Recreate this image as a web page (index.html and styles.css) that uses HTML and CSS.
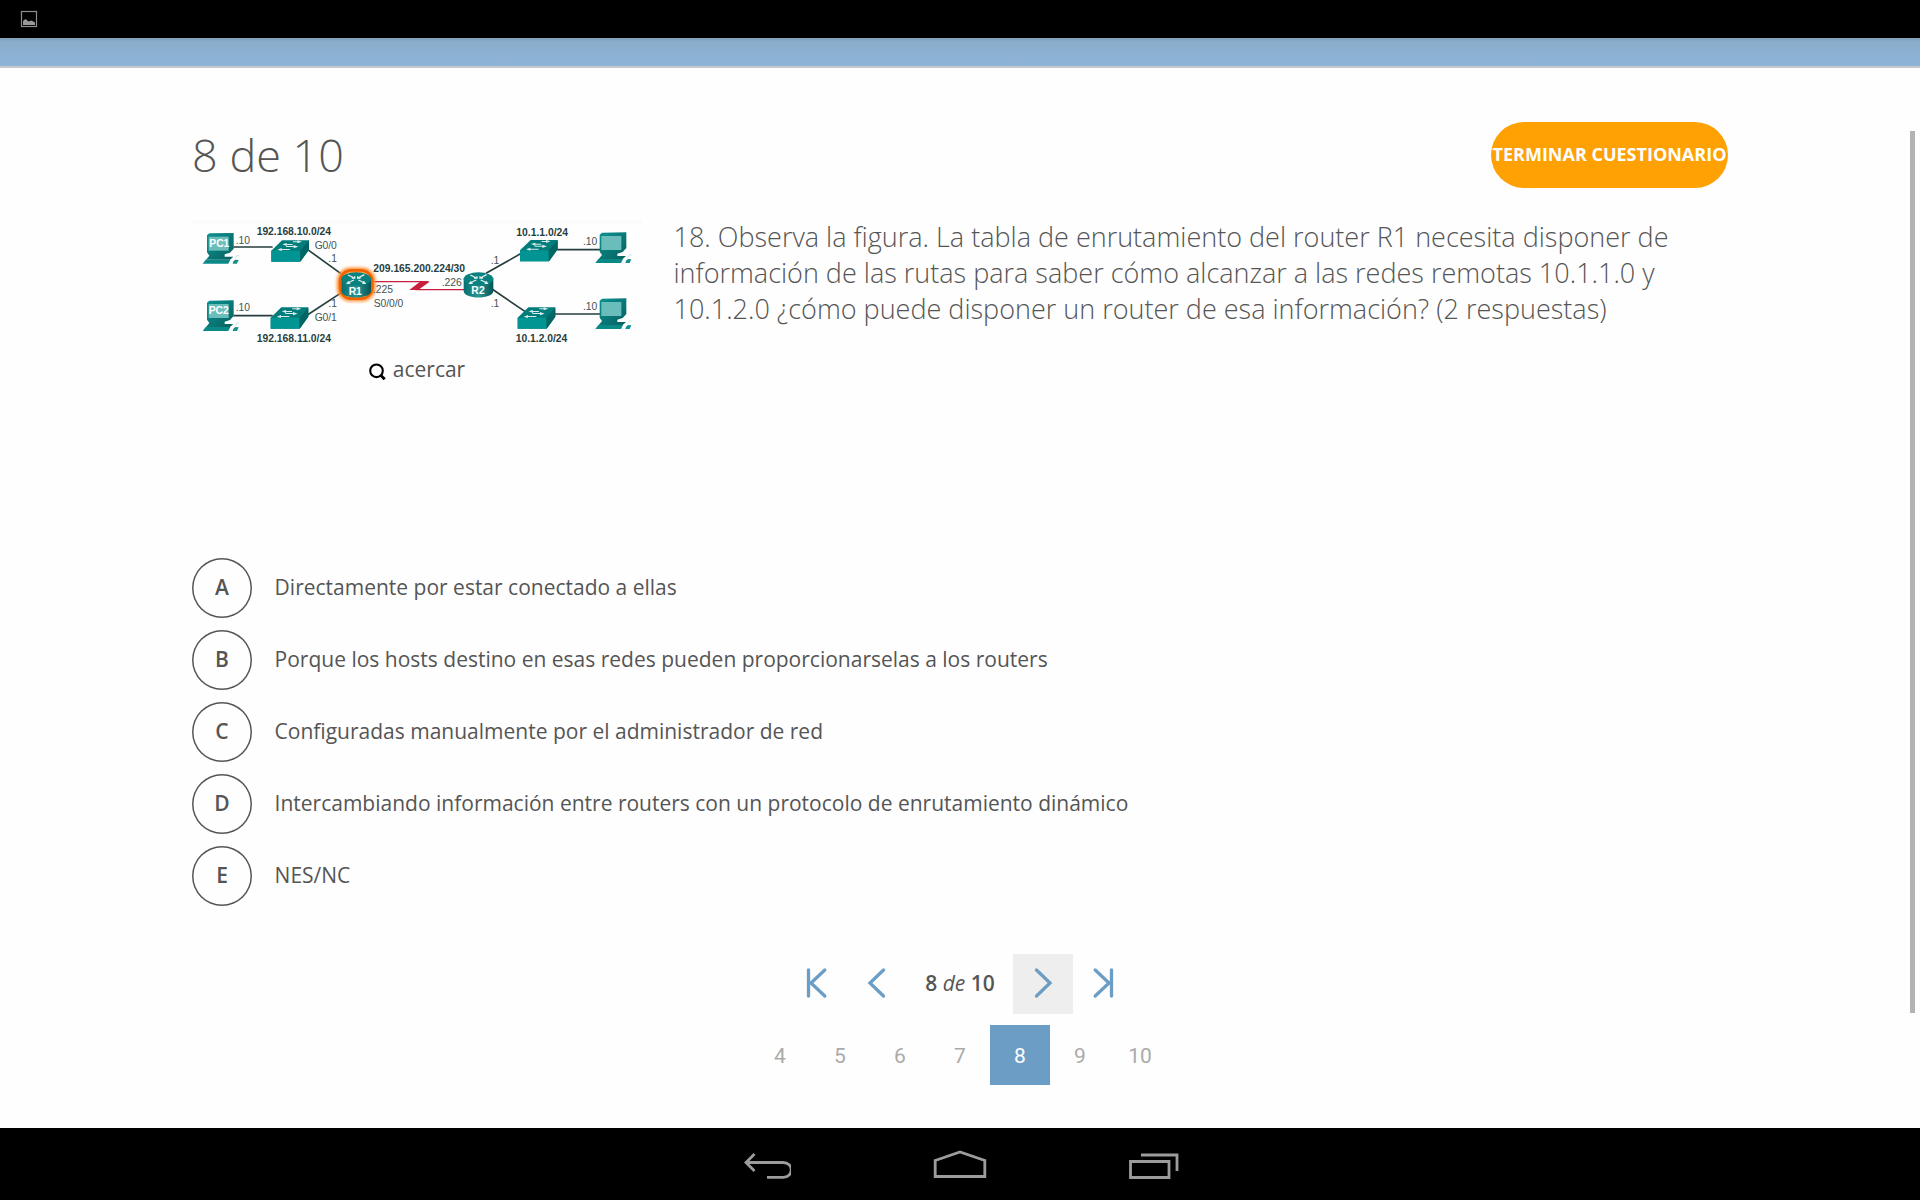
FILE: index.html
```html
<!DOCTYPE html>
<html lang="es">
<head>
<meta charset="utf-8">
<title>Cuestionario</title>
<link rel="stylesheet" href="styles.css">
</head>
<body>
<div class="screen">
  <div class="status">
    <svg width="18" height="18" viewBox="0 0 18 18"><rect x="1.500" y="1.500" width="15" height="15" fill="none" stroke="#8e8e8e" stroke-width="1.200"/><path d="M3 15V11L5.500 9 8.500 11.500 11.500 10.500 15 12.500V15Z" fill="#999"/></svg>
  </div>
  <div class="appbar"></div>
  <main class="content">
    <header class="head">
      <h1 class="title">8 de 10</h1>
      <button class="finish"><span>TERMINAR CUESTIONARIO</span></button>
    </header>
    <section class="question">
      <figure class="figure">
        <svg class="network" viewBox="36 30 1350 390">
          <defs>
            <linearGradient id="body" x1="0" x2="1" y1="0" y2="1"><stop offset="0" stop-color="#0b9291"/><stop offset="1" stop-color="#07615f"/></linearGradient>
            <linearGradient id="cyl"><stop offset="0" stop-color="#04706f"/><stop offset=".5" stop-color="#2b9594"/><stop offset="1" stop-color="#035554"/></linearGradient>
            <filter id="glow" x="-30%" y="-30%" width="160%" height="160%"><feGaussianBlur stdDeviation="4"/></filter>
            <g id="pc">
              <path d="M13 7L20 1 93 0V47L82 59 66 64V71H92L82 80H10L20 68 13 58Z" fill="url(#body)"/>
              <rect x="18" y="11" width="60" height="42" fill="#6abdbb"/>
              <path d="M9 80H83L77 92H0Z" fill="#0a8987"/>
              <path d="M92 85L98 80 108 81 103 92H90Z" fill="#16908e"/>
              <path d="M98 76L103 67 109 68" fill="none" stroke="#cfe6e6" stroke-width="3"/>
            </g>
            <g id="switch">
              <path d="M0 31L32 0H113V28L87 64H0Z" fill="#007d7b"/>
              <path d="M0 31H86V64H0Z" fill="#009492"/>
              <path d="M86 31L113 1V28L87 64Z" fill="#006664"/>
              <path d="M18 28L31 23V26H56V29H31V32ZM81 19L67 14V17H44V20H67V24ZM33 12L46 8V11H64V14H46V17ZM92 4L78 0V3H65V6H78V9Z" fill="#d8eceb"/>
            </g>
            <g id="router">
              <path d="M0 20V58C0 84 89 84 89 58V20Z" fill="url(#cyl)"/>
              <ellipse cx="44.500" cy="22" rx="44.500" ry="20" fill="#08817f"/>
              <path d="M20 10L39 19M69 9L50 19M18 34L38 25M71 34L51 25M31 19H40V14M49 14V19H58M22 29L18 35 27 35M63 35H71L67 29" fill="none" stroke="#e4efee" stroke-width="4"/>
            </g>
          </defs>
          <path d="M36 35H1386" stroke="#fafafa" stroke-width="9"/>
          <g fill="none" stroke="#263e3e" stroke-width="5">
            <path d="M160 111H278M160 317H278M382 118L490 196M382 315L490 244M918 190L1024 130M936 237L1040 308M1130 119H1262M1124 312H1262"/>
          </g>
          <path d="M570 215H742L712 239H854" fill="none" stroke="#c91f3c" stroke-width="4"/>
          <path d="M688 240L719 216H748L714 240Z" fill="#c91f3c"/>
          <use href="#pc" x="68" y="69"/><use href="#pc" x="68" y="271"/>
          <use href="#pc" x="1246" y="67"/><use href="#pc" x="1246" y="265"/>
          <use href="#switch" x="274" y="91"/><use href="#switch" x="272" y="292"/>
          <use href="#switch" x="1020" y="90"/><use href="#switch" x="1013" y="292"/>
          <rect x="475" y="177" width="107" height="93" rx="36" fill="#ffab5a" stroke="#ff8d31" stroke-width="9" filter="url(#glow)"/>
          <rect x="480" y="181" width="97" height="85" rx="34" fill="none" stroke="#f26200" stroke-width="8"/>
          <use href="#router" x="484" y="185"/><use href="#router" x="851" y="185"/>
          <g class="net-bold">
            <text x="230" y="75.500" textLength="223">192.168.10.0/24</text>
            <text x="230" y="395.500" textLength="223">192.168.11.0/24</text>
            <text x="580" y="186.500" textLength="275">209.165.200.224/30</text>
            <text x="1009" y="77.500" textLength="155">10.1.1.0/24</text>
            <text x="1007" y="394.500" textLength="155">10.1.2.0/24</text>
          </g>
          <g class="net-label">
            <text x="167" y="101">.10</text><text x="167" y="304">.10</text>
            <text x="404" y="117" textLength="66">G0/0</text><text x="404" y="332" textLength="66">G0/1</text>
            <text x="445" y="157">.1</text><text x="445" y="292">.1</text>
            <text x="579" y="249">.225</text><text x="581" y="290" textLength="89">S0/0/0</text>
            <text x="785" y="227">.226</text>
            <text x="932" y="163">.1</text><text x="932" y="290">.1</text>
            <text x="1209" y="104">.10</text><text x="1209" y="300">.10</text>
          </g>
          <g class="net-device">
            <text x="88" y="112" textLength="60">PC1</text><text x="86" y="313" textLength="60">PC2</text>
            <text x="506" y="255" textLength="39">R1</text><text x="874" y="253" textLength="40">R2</text>
          </g>
        </svg>
        <figcaption class="zoom">
          <svg width="18" height="18" viewBox="0 0 18 18" fill="none" stroke="#000"><circle cx="7.500" cy="7.800" r="6.300" stroke-width="2.100"/><path d="M11.500 12L15.700 16.200" stroke-width="3"/></svg>
          <span>acercar</span>
        </figcaption>
      </figure>
      <p class="prompt">18. Observa la figura. La tabla de enrutamiento del router R1 necesita disponer de<br>información de las rutas para saber cómo alcanzar a las redes remotas 10.1.1.0 y<br>10.1.2.0 ¿cómo puede disponer un router de esa información? (2 respuestas)</p>
    </section>
    <ul class="answers">
      <li class="answer"><span class="letter">A</span><span class="text">Directamente por estar conectado a ellas</span></li>
      <li class="answer"><span class="letter">B</span><span class="text">Porque los hosts destino en esas redes pueden proporcionarselas a los routers</span></li>
      <li class="answer"><span class="letter">C</span><span class="text">Configuradas manualmente por el administrador de red</span></li>
      <li class="answer"><span class="letter">D</span><span class="text">Intercambiando información entre routers con un protocolo de enrutamiento dinámico</span></li>
      <li class="answer"><span class="letter">E</span><span class="text">NES/NC</span></li>
    </ul>
    <nav class="pager">
      <a class="step"><svg viewBox="0 0 60 60"><path d="M21.500 16V42M37.800 16L24 29 37.800 42"/></svg></a>
      <a class="step"><svg viewBox="0 0 60 60"><path d="M36.500 16L23 29 36.500 42"/></svg></a>
      <span class="count"><b>8</b> <i>de</i> <b>10</b></span>
      <a class="step active"><svg viewBox="0 0 60 60"><path d="M23.500 16L37 29 23.500 42"/></svg></a>
      <a class="step"><svg viewBox="0 0 60 60"><path d="M38.500 16V42M22.200 16L36 29 22.200 42"/></svg></a>
    </nav>
    <nav class="pages">
      <a>4</a><a>5</a><a>6</a><a>7</a><a class="current">8</a><a>9</a><a>10</a>
    </nav>
    <div class="scrollbar"></div>
  </main>
  <footer class="navbar">
    <svg width="50" height="28" viewBox="0 0 50 28"><path d="M13.500 1L5 9.500 13.500 18M6 9.500H42C53 9.500 53 24.300 42 24.300H26"/></svg>
    <svg width="54" height="30" viewBox="0 0 54 30"><path d="M2.200 11.500L27 3 51.800 11.500V27.500H2.200Z"/></svg>
    <svg width="50" height="28" viewBox="0 0 50 28"><path d="M1.500 8.500H40V24.500H1.500ZM12 2H48V18"/></svg>
  </footer>
</div>
</body>
</html>
```
FILE: styles.css
```css
* { box-sizing: border-box; }
body { margin: 0; background: #fff; font-family: "Open Sans", sans-serif; color: #555; }
.screen { width: 1920px; height: 1200px; display: flex; flex-direction: column; overflow: hidden; }
.status { height: 38px; background: #000; padding: 10px 0 0 20px; flex: none; }
.status svg { display: block; }
.appbar { height: 30px; flex: none; background: linear-gradient(#7f9fb9, #8aaecb 4px, #8cb2d5 20px); border-bottom: 2px solid #c4c8cc; }
.content { position: relative; height: 1060px; flex: none; padding: 54px 192px 0; background: #fefefe; }
.head { display: flex; justify-content: space-between; height: 98px; }
.title { margin: 0; font-size: 45px; font-weight: 300; line-height: 66px; }
.finish { width: 237px; height: 66px; border: 0; border-radius: 33px; background: #ffa103; color: #fff; font: 700 18px/64px "Open Sans", sans-serif; padding: 0; white-space: nowrap; display: flex; justify-content: center; }
.question { display: flex; height: 338px; }
.figure { margin: 0; width: 450px; flex: none; }
.network { display: block; width: 450px; height: 130px; }
.net-bold { font: 700 31px "Liberation Sans", sans-serif; fill: #263e3e; }
.net-label { font: 400 31px "Liberation Sans", sans-serif; fill: #435454; }
.net-device { font: 700 31px "Liberation Sans", sans-serif; fill: #fff; }
.zoom { display: flex; justify-content: center; gap: 6px; font-size: 21px; line-height: 38px; }
.zoom svg { margin-top: 13px; }
.prompt { margin: -1px 0 0 31.500px; font-size: 27px; font-weight: 300; line-height: 36px; white-space: nowrap; }
.answers { list-style: none; margin: 0; padding: 0; display: flex; flex-direction: column; gap: 12px; }
.answer { display: flex; height: 60px; gap: 22.600px; font-size: 21px; line-height: 58px; }
.letter { width: 60px; height: 60px; box-shadow: inset 0 0 0 1.500px #555; border-radius: 50%; text-align: center; font-weight: 600; line-height: 58px; }
.text { white-space: nowrap; }
.pager { display: flex; justify-content: center; height: 60px; margin-top: 48px; }
.step { width: 60px; height: 60px; }
.step.active { background: #eee; }
.step svg { display: block; fill: none; stroke: #6c9ec5; stroke-width: 3.300; stroke-linecap: round; }
.count { width: 106px; text-align: center; font-size: 21px; line-height: 59px; }
.count b { font-weight: 600; }
.pages { display: flex; justify-content: center; margin-top: 11px; }
.pages a { width: 60px; height: 60px; text-align: center; font: 400 21px/63px Roboto, sans-serif; color: #aaa; }
.pages .current { background: #6c9ec5; color: #fff; }
.scrollbar { position: absolute; left: 1910px; top: 63px; width: 5px; height: 882px; background: #b3b3b3; }
.navbar { height: 72px; flex: none; background: #000; display: flex; justify-content: center; gap: 142px; padding-top: 24px; }
.navbar svg { fill: none; stroke: #9c9c9c; stroke-width: 2.800; margin-top: 1px; }
.navbar svg:nth-child(2) { margin-top: -3px; }
```
